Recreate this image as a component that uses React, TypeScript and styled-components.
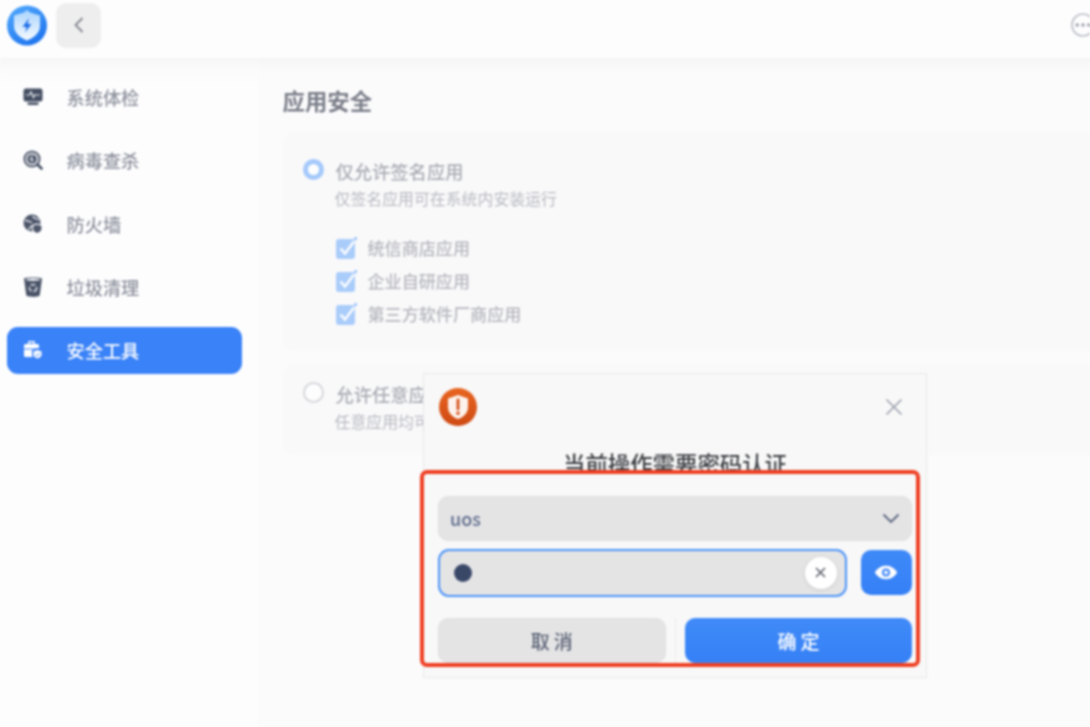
import React from "react";
import styled, { createGlobalStyle } from "styled-components";

const FONT = `"Noto Sans CJK SC", "Noto Sans", "Liberation Sans", sans-serif`;

const Global = createGlobalStyle`
  html, body { margin: 0; padding: 0; background: #fdfdfe; }
  body { width: 1090px; height: 727px; overflow: hidden; font-family: ${FONT}; }
  * { box-sizing: border-box; }
`;

const Page = styled.div`
  position: relative;
  width: 1090px;
  height: 727px;
  overflow: hidden;
  display: flex;
  flex-direction: column;
  background: #fdfdfe;
  filter: blur(0.9px);
`;

const Header = styled.header`
  flex: 0 0 58px;
  display: flex;
  align-items: center;
  padding: 0 0 8px 7px;
  gap: 9px;
  background: #fdfdfe;
`;

const BackButton = styled.button`
  width: 45px;
  height: 45px;
  border: 1px solid #f0f0f1;
  border-radius: 10px;
  background: #eeeeef;
  display: flex;
  align-items: center;
  justify-content: center;
  padding: 0;
`;

const MoreButton = styled.div`
  margin-left: auto;
  margin-right: -5px;
  display: flex;
`;

const Body = styled.div`
  flex: 1;
  display: flex;
  min-height: 0;
`;

const Sidebar = styled.nav`
  flex: 0 0 258px;
  padding: 15.5px 0 0 7px;
  display: flex;
  flex-direction: column;
  gap: 16.25px;
  background: linear-gradient(#f6f6f7 0, #fbfbfc 12px, #fdfdfe 26px);
`;

const NavItem = styled.div<{ $active?: boolean }>`
  width: 235px;
  height: 47px;
  flex: none;
  border-radius: 11px;
  display: flex;
  align-items: center;
  padding-left: 16px;
  gap: 23.5px;
  font-size: 18.2px;
  font-weight: 500;
  color: ${(p) => (p.$active ? "#ffffff" : "#8f939f")};
  background: ${(p) => (p.$active ? "#3a82f7" : "transparent")};
`;

const Main = styled.main`
  flex: 1;
  padding: 26px 0 0 24.5px;
  background: linear-gradient(#f5f5f6 0, #fbfbfc 14px);
  min-width: 0;
`;

const PageTitle = styled.h1`
  margin: 0 0 15px;
  font-size: 22.4px;
  line-height: 33px;
  font-weight: 700;
  color: #7b7e89;
`;

const Card = styled.section<{ $h: number }>`
  height: ${(p) => p.$h}px;
  margin-right: -10px;
  margin-bottom: 13px;
  border-radius: 12px;
  background: #f9f9fa;
  padding: 0 0 0 20px;
`;

const OptionRow = styled.div<{ $top: number }>`
  display: flex;
  gap: 12px;
  padding-top: ${(p) => p.$top}px;
`;

const Radio = styled.span<{ $on?: boolean }>`
  flex: none;
  width: 21px;
  height: 21px;
  margin-top: 1px;
  border-radius: 50%;
  background: #fdfdfe;
  border: ${(p) => (p.$on ? "5px solid #a5c9fb" : "2.5px solid #d6d7db")};
`;

const OptionText = styled.div`
  display: flex;
  flex-direction: column;
`;

const OptionTitle = styled.div`
  font-size: 18.3px;
  line-height: 26px;
  font-weight: 500;
  color: #abadb5;
`;

const OptionSub = styled.div`
  font-size: 15.9px;
  line-height: 24px;
  margin-top: 3px;
  color: #b9bac2;
  margin-left: -1px;
`;

const CheckList = styled.div`
  margin: 24px 0 0 33px;
  display: flex;
  flex-direction: column;
  gap: 8px;
`;

const CheckRow = styled.div`
  height: 25px;
  display: flex;
  align-items: center;
  gap: 11px;
  font-size: 17.1px;
  font-weight: 500;
  color: #b6b7be;
`;

const Dialog = styled.div`
  position: absolute;
  left: 423px;
  top: 373px;
  width: 504px;
  height: 305px;
  background: #f8f8f8;
  border: 1px solid #e8e8ea;
  display: flex;
  flex-direction: column;
  padding: 13px 0 0 15px;
`;

const DialogTop = styled.div`
  display: flex;
  justify-content: space-between;
  align-items: center;
  height: 40px;
  padding-right: 23px;
`;

const DialogTitle = styled.h2`
  margin: 20px 0 0 -15px;
  font-size: 22.4px;
  line-height: 33px;
  font-weight: 500;
  text-align: center;
  color: #3b3d42;
`;

const Highlight = styled.form`
  margin: -10.5px 0 0 -19px;
  width: 500px;
  height: 197px;
  border: 4px solid #ef3f22;
  border-radius: 7px;
  background: #f8f8f8;
  padding: 22px 4.5px 0 14px;
  display: flex;
  flex-direction: column;
`;

const Select = styled.div`
  height: 45px;
  border-radius: 10px;
  border: 1px solid #e0e0e1;
  background: #e4e4e5;
  display: flex;
  align-items: center;
  justify-content: space-between;
  padding: 0 11px 0 11px;
  font-size: 18px;
  font-weight: 500;
  color: #5f6c8c;
`;

const PasswordRow = styled.div`
  margin-top: 8px;
  display: flex;
  align-items: center;
  gap: 14px;
`;

const PasswordField = styled.div`
  width: 409px;
  height: 48px;
  border-radius: 11px;
  border: 2.5px solid #4c94f8;
  background: #e4e4e5;
  display: flex;
  align-items: center;
  justify-content: space-between;
  padding: 0 8px 0 14px;
`;

const Dot = styled.span`
  width: 18px;
  height: 18px;
  border-radius: 50%;
  background: #3a4868;
`;

const ClearButton = styled.span`
  width: 32px;
  height: 32px;
  border-radius: 50%;
  background: #fff;
  box-shadow: 0 1px 4px rgba(0, 0, 0, 0.1);
  display: flex;
  align-items: center;
  justify-content: center;
`;

const EyeButton = styled.span`
  width: 51px;
  height: 45px;
  border-radius: 10px;
  background: linear-gradient(#3f8af8, #3580f6);
  display: flex;
  align-items: center;
  justify-content: center;
`;

const Actions = styled.div`
  margin-top: 21px;
  display: flex;
  align-items: stretch;
  height: 45px;
`;

const ActionButton = styled.button<{ $primary?: boolean }>`
  width: ${(p) => (p.$primary ? 227 : 228)}px;
  height: 45px;
  border-radius: 10px;
  border: 1px solid ${(p) => (p.$primary ? "#3d87f8" : "#e0e0e1")};
  background: ${(p) => (p.$primary ? "linear-gradient(#408bf8, #3580f6)" : "#e4e4e5")};
  color: ${(p) => (p.$primary ? "#ffffff" : "#5c6476")};
  font-family: ${FONT};
  font-size: 19px;
  font-weight: 500;
  letter-spacing: 4px;
  padding: 0 0 0 ${(p) => (p.$primary ? 5 : 4)}px;
`;

const Divider = styled.span`
  width: 1px;
  margin: 0 9px;
  background: #ededee;
`;

const Logo = () => (
  <svg width="40" height="41" viewBox="0 0 40 41">
    <defs>
      <linearGradient id="lg" x1="0.2" y1="0" x2="0.8" y2="1">
        <stop offset="0" stopColor="#4fa6fb" />
        <stop offset="1" stopColor="#1c72ee" />
      </linearGradient>
      <linearGradient id="sh" x1="0" y1="0" x2="0" y2="1">
        <stop offset="0" stopColor="#a9d4fd" />
        <stop offset="1" stopColor="#f6faff" />
      </linearGradient>
    </defs>
    <circle cx="20" cy="20.5" r="20" fill="url(#lg)" />
    <path d="M20 5 L23 7.5 L33 10.5 V21 C33 28 27 32.5 20 35.5 C13 32.5 7 28 7 21 V10.5 L17 7.5 Z" fill="url(#sh)" />
    <path d="M22 13 L15.5 22 H19.5 L18 27.5 L24.5 19 H20.5 Z" fill="#1f6fe8" />
  </svg>
);

const Monitor = () => (
  <svg width="20" height="20" viewBox="0 0 20 20">
    <rect x="0.5" y="1.5" width="19" height="13" rx="2.5" fill="#454f63" />
    <path d="M3 8 H6.5 L8 5 L10.5 10.5 L12 7.5 L13 8 H17" fill="none" stroke="#e6e8ee" strokeWidth="1.2" />
    <rect x="4.5" y="15.5" width="11" height="2.5" rx="1" fill="#454f63" />
  </svg>
);

const VirusSearch = () => (
  <svg width="20" height="20" viewBox="0 0 20 20">
    <circle cx="9" cy="9" r="7.6" fill="#d3d5db" stroke="#596274" strokeWidth="2" />
    <circle cx="9" cy="9" r="4.6" fill="#4d566a" />
    <path d="M9.5 5.5 L7.5 9.5 H10 L8.5 12" fill="none" stroke="#e6e8ee" strokeWidth="1.1" />
    <path d="M14.5 14.5 L18.5 18.5" stroke="#454f63" strokeWidth="2.6" strokeLinecap="round" />
  </svg>
);

const Globe = () => (
  <svg width="20" height="20" viewBox="0 0 20 20">
    <circle cx="9" cy="9" r="8.5" fill="#4d566a" />
    <path d="M2 7 C5 5 6 9 9 8 M6 16 C6 12 9 13 10 11 M10 2 C10 5 14 4 16 6" fill="none" stroke="#e6e8ee" strokeWidth="1.3" />
    <path d="M14 10 L19 11.5 V15 C19 17 16.5 18.8 14 19.5 C11.5 18.8 9.5 17 9.5 15 V11.5 Z" fill="#4d566a" stroke="#fdfdfe" strokeWidth="1.2" />
  </svg>
);

const Bin = () => (
  <svg width="20" height="22" viewBox="0 0 20 22">
    <path d="M1 2.5 C1 1 19 1 19 2.5 L16.8 19 C16.5 21.5 3.5 21.5 3.2 19 Z" fill="#4a5468" />
    <ellipse cx="10" cy="3.6" rx="7.4" ry="1.3" fill="#eceef2" />
    <circle cx="10" cy="12" r="3.6" fill="none" stroke="#dfe2e9" strokeWidth="1.5" strokeDasharray="5 2" />
  </svg>
);

const Toolbox = () => (
  <svg width="20" height="20" viewBox="0 0 20 20">
    <path d="M6 4 V1.8 H11 V4" fill="none" stroke="#fff" strokeWidth="1.5" />
    <rect x="1" y="4" width="15" height="13" rx="1.5" fill="#fff" />
    <path d="M1 9 H17" stroke="#3a82f7" strokeWidth="1" />
    <path d="M14.5 8 L20 10 V15 C20 17.2 17.5 19 14.5 20 C11.5 19 9 17.2 9 15 V10 Z" fill="#3a82f7" />
    <path d="M14.5 10 L18.5 11.4 V15 C18.5 16.4 16.5 17.8 14.5 18.4 C12.5 17.8 10.5 16.4 10.5 15 V11.4 Z" fill="#fff" />
    <path d="M12.8 14.4 L14.3 15.8 L16.4 13.2" fill="none" stroke="#3a82f7" strokeWidth="1" />
  </svg>
);

const CheckIcon = () => (
  <svg width="21" height="22" viewBox="0 0 21 22" style={{ flex: "none" }}>
    <rect x="0" y="2" width="19" height="20" rx="3" fill="#a9ccfa" />
    <path d="M4.5 11.5 L9 16.5 L18 4.5" fill="none" stroke="#fbfcff" strokeWidth="2.6" />
    <circle cx="19.6" cy="1.6" r="1.5" fill="#8fbcf8" />
  </svg>
);

const WarnLogo = () => (
  <svg width="38" height="38" viewBox="0 0 38 38">
    <defs>
      <linearGradient id="wg" x1="0" y1="0" x2="0" y2="1">
        <stop offset="0" stopColor="#e8641f" />
        <stop offset="1" stopColor="#cf4a14" />
      </linearGradient>
    </defs>
    <circle cx="19" cy="19" r="19" fill="url(#wg)" />
    <path d="M19 7 L29 10.5 V19 C29 25 24.5 29 19 31 C13.5 29 9 25 9 19 V10.5 Z" fill="#fdf3ec" />
    <path d="M19 12 V21" stroke="#d4501a" strokeWidth="2.8" strokeLinecap="round" />
    <circle cx="19" cy="25.2" r="1.7" fill="#d4501a" />
  </svg>
);

const NAV = [
  { label: "系统体检", icon: <Monitor /> },
  { label: "病毒查杀", icon: <VirusSearch /> },
  { label: "防火墙", icon: <Globe /> },
  { label: "垃圾清理", icon: <Bin /> },
  { label: "安全工具", icon: <Toolbox />, active: true },
];

const CHECKS = ["统信商店应用", "企业自研应用", "第三方软件厂商应用"];

export default function App() {
  return (
    <Page>
      <Global />
      <Header>
        <Logo />
        <BackButton aria-label="返回">
          <svg width="12" height="18" viewBox="0 0 12 18">
            <path d="M9.5 2 L2.5 9 L9.5 16" fill="none" stroke="#83868f" strokeWidth="1.8" />
          </svg>
        </BackButton>
        <MoreButton>
          <svg width="24" height="24" viewBox="0 0 24 24">
            <circle cx="12" cy="12" r="11" fill="none" stroke="#bfc1c9" strokeWidth="1.7" />
            <circle cx="6.2" cy="12" r="1.7" fill="#9a9da8" />
            <circle cx="12" cy="12" r="1.7" fill="#9a9da8" />
            <circle cx="17.8" cy="12" r="1.7" fill="#9a9da8" />
          </svg>
        </MoreButton>
      </Header>
      <Body>
        <Sidebar>
          {NAV.map((n) => (
            <NavItem key={n.label} $active={n.active}>
              {n.icon}
              {n.label}
            </NavItem>
          ))}
        </Sidebar>
        <Main>
          <PageTitle>应用安全</PageTitle>
          <Card $h={219}>
            <OptionRow $top={26}>
              <Radio $on />
              <OptionText>
                <OptionTitle>仅允许签名应用</OptionTitle>
                <OptionSub>仅签名应用可在系统内安装运行</OptionSub>
              </OptionText>
            </OptionRow>
            <CheckList>
              {CHECKS.map((c) => (
                <CheckRow key={c}>
                  <CheckIcon />
                  {c}
                </CheckRow>
              ))}
            </CheckList>
          </Card>
          <Card $h={91}>
            <OptionRow $top={17}>
              <Radio />
              <OptionText>
                <OptionTitle>允许任意应用</OptionTitle>
                <OptionSub>任意应用均可在系统内安装运行</OptionSub>
              </OptionText>
            </OptionRow>
          </Card>
        </Main>
      </Body>
      <Dialog>
        <DialogTop>
          <WarnLogo />
          <svg width="18" height="18" viewBox="0 0 18 18">
            <path d="M1.5 1.5 L16.5 16.5 M16.5 1.5 L1.5 16.5" stroke="#9da1ae" strokeWidth="1.6" />
          </svg>
        </DialogTop>
        <DialogTitle>当前操作需要密码认证</DialogTitle>
        <Highlight>
          <Select>
            uos
            <svg width="18" height="11" viewBox="0 0 18 11">
              <path d="M1.5 1.5 L9 9 L16.5 1.5" fill="none" stroke="#5d6780" strokeWidth="1.9" />
            </svg>
          </Select>
          <PasswordRow>
            <PasswordField>
              <Dot />
              <ClearButton>
                <svg width="11" height="11" viewBox="0 0 11 11">
                  <path d="M1 1 L10 10 M10 1 L1 10" stroke="#5d616c" strokeWidth="1.6" />
                </svg>
              </ClearButton>
            </PasswordField>
            <EyeButton>
              <svg width="24" height="15" viewBox="0 0 24 15">
                <path d="M0.8 7.5 C4 2.5 8 0.8 12 0.8 C16 0.8 20 2.5 23.2 7.5 C20 12.5 16 14.2 12 14.2 C8 14.2 4 12.5 0.8 7.5 Z" fill="#fff" />
                <circle cx="12" cy="7.5" r="4" fill="#3a84f7" />
                <circle cx="12" cy="7.5" r="2" fill="#fff" />
              </svg>
            </EyeButton>
          </PasswordRow>
          <Actions>
            <ActionButton type="button">取消</ActionButton>
            <Divider />
            <ActionButton type="button" $primary>确定</ActionButton>
          </Actions>
        </Highlight>
      </Dialog>
    </Page>
  );
}
